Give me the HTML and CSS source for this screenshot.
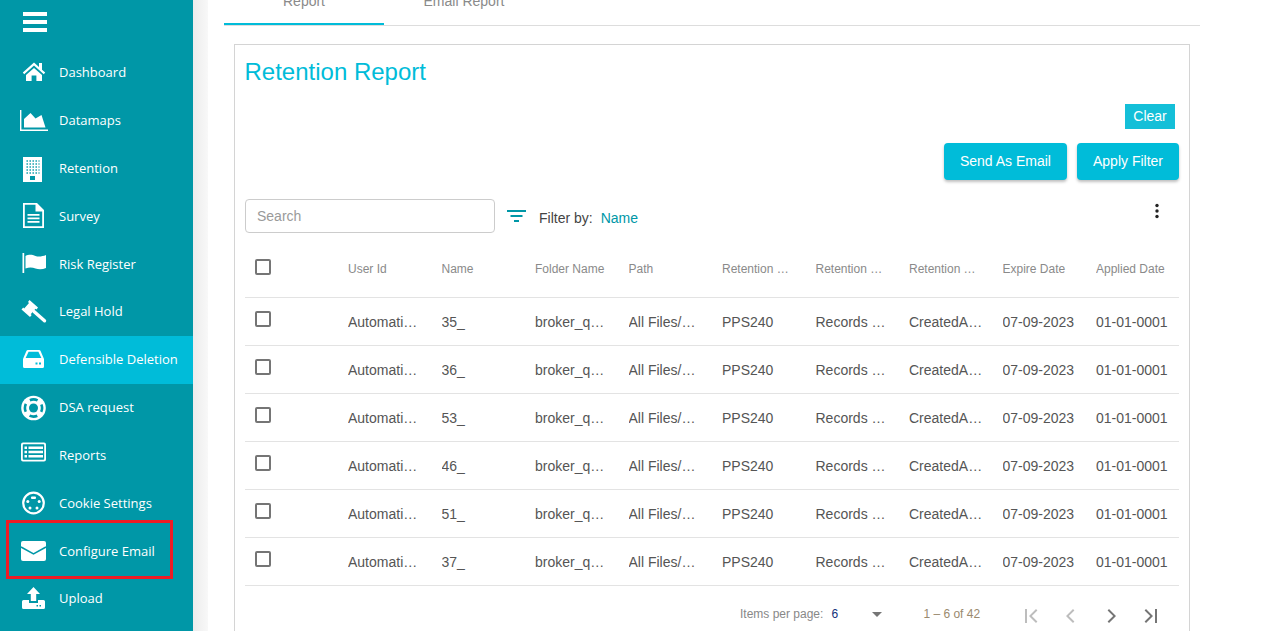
FILE: index.html
```html
<!DOCTYPE html>
<html lang="en">
<head>
<meta charset="utf-8">
<title>Retention Report</title>
<link rel="stylesheet" href="styles.css">
</head>
<body>
<div class="page">
  <nav class="sidebar">
    <div class="burger"><span></span><span></span><span></span></div>
    <a class="nav-item"><svg viewBox="0 0 28 28"><path d="M14 3.500 2.800 13.600l1.400 1.600L14 6.600l9.800 8.600 1.400-1.600-3.200-2.900V4h-3v3.900z"/><path d="M6 16 14 9l8 7v6h-5.600v-5.500h-4.800V22H6z"/></svg><span>Dashboard</span></a>
    <a class="nav-item"><svg viewBox="0 0 28 28"><path d="M0 3h1.400v19.400H28V24H0z"/><path d="M4 20.500V12l6.500-6 5 5.500 6-3.500 4 12.500z"/></svg><span>Datamaps</span></a>
    <a class="nav-item"><svg viewBox="0 0 28 28"><rect x="3" y="2" width="19" height="25"/><path class="win" d="M6.500 6h13M6.500 9h13M6.500 12h13M6.500 15h13M6.500 18h13"/><rect class="cut" x="10" y="21" width="5" height="4"/></svg><span>Retention</span></a>
    <a class="nav-item"><svg viewBox="0 0 28 28"><path d="M3 1h14l7 7v18H3zm1.800 1.800v21.400h17.400V9.500H15.500V2.800z" fill-rule="evenodd"/><path d="M7.500 12h12v1.800h-12zM7.500 15.500h12v1.800h-12zM7.500 19h12v1.800h-12z"/></svg><span>Survey</span></a>
    <a class="nav-item"><svg viewBox="0 0 28 28"><rect x="2.500" y="3" width="1.700" height="20"/><path d="M5.500 6c4-2 7-1 10 0 3 1 7 .5 10.500-1v13c-3.500 1.500-7.500 1.500-10.500.5-3-1-6-1.500-10 0z"/></svg><span>Risk Register</span></a>
    <a class="nav-item"><svg viewBox="0 0 28 28"><path d="m9.500 2 8.500 7.500-1.500 2-1-.8-4.800 5.500 1 .9-1.700 1.900-8.500-7.500 1.700-1.900 1 .8 4.800-5.500-1-.9z"/><path class="handle" d="M14 13.500 24.500 22.800"/></svg><span>Legal Hold</span></a>
    <a class="nav-item active"><svg viewBox="0 0 28 28"><path d="M8 4h11c.8 0 1.300.4 1.600 1L24 13v7.500a1.500 1.500 0 0 1-1.500 1.500h-18A1.500 1.500 0 0 1 3 20.500V13l3.400-8c.3-.6.8-1 1.600-1zm.6 1.800-3 6.200h15.800l-3-6.200z" fill-rule="evenodd"/><rect class="cut" x="15.500" y="16.500" width="2" height="2"/><rect class="cut" x="19" y="16.500" width="2" height="2"/></svg><span>Defensible Deletion</span></a>
    <a class="nav-item"><svg viewBox="0 0 28 28"><circle cx="13.500" cy="14" r="12.300"/><circle class="band" cx="13.500" cy="14" r="8.600"/><circle class="cut" cx="13.500" cy="14" r="4.500"/></svg><span>DSA request</span></a>
    <a class="nav-item"><svg viewBox="0 0 28 28"><path d="M3 1.500h21a2 2 0 0 1 2 2v15a2 2 0 0 1-2 2H3a2 2 0 0 1-2-2v-15a2 2 0 0 1 2-2zm.5 1.800a.7.7 0 0 0-.7.700v14a.7.7 0 0 0 .7.700h20a.7.7 0 0 0 .7-.7V4a.7.7 0 0 0-.7-.7z" fill-rule="evenodd"/><path d="M4.500 5.500H7v2.500H4.500zM4.500 9.800H7v2.500H4.500zM4.500 14H7v2.500H4.500zM8.500 5.500H23v2.500H8.500zM8.500 9.800H23v2.500H8.500zM8.500 14H23v2.500H8.500z"/></svg><span>Reports</span></a>
    <a class="nav-item"><svg viewBox="0 0 28 28"><circle class="ring" cx="13.500" cy="14" r="10.300"/><rect x="11" y="7.500" width="5" height="2.400" rx="1"/><circle cx="7.800" cy="12.500" r="1.500"/><circle cx="19.200" cy="12.500" r="1.500"/><circle cx="10" cy="19" r="1.500"/><circle cx="17" cy="19" r="1.500"/></svg><span>Cookie Settings</span></a>
    <a class="nav-item"><svg viewBox="0 0 28 28"><rect x="1" y="4" width="25" height="20" rx="2"/><path class="vee" d="M1 10l12.500 7L26 10"/></svg><span>Configure Email</span></a>
    <a class="nav-item"><svg viewBox="0 0 28 28"><path d="M13.500 2 20 9h-3.800v7h-5.400V9H7z"/><path d="M3.500 15H9v3h9v-3h5.500a1.500 1.500 0 0 1 1.500 1.500v6a1.500 1.500 0 0 1-1.500 1.500h-20A1.500 1.500 0 0 1 2 22.500v-6A1.500 1.500 0 0 1 3.500 15z"/><rect class="cut" x="16.500" y="20" width="1.500" height="1.500"/><rect class="cut" x="19.500" y="20" width="1.500" height="1.500"/></svg><span>Upload</span></a>
    <div class="callout"></div>
  </nav>
  <div class="gutter"></div>
  <main class="main">
    <div class="tabs">
      <div class="tab selected">Report</div>
      <div class="tab">Email Report</div>
    </div>
    <section class="card">
      <h1 class="title">Retention Report</h1>
      <div class="clear-row"><button class="btn-clear">Clear</button></div>
      <div class="action-row">
        <button class="btn">Send As Email</button>
        <button class="btn">Apply Filter</button>
      </div>
      <div class="filter-row">
        <input class="search" placeholder="Search">
        <svg class="filter-icon" viewBox="0 0 19 12"><path d="M0 0h19v2H0zM3.500 5h12v2h-12zM7 10h5v2H7z"/></svg>
        <span class="filter-label">Filter by:</span>
        <span class="filter-value">Name</span>
        <svg class="kebab" viewBox="0 0 6 16"><circle cx="3" cy="2.500" r="1.700"/><circle cx="3" cy="8" r="1.700"/><circle cx="3" cy="13.500" r="1.700"/></svg>
      </div>
      <div class="table">
        <div class="row head">
          <div class="c-check"><i class="box"></i></div>
          <div class="cell">User Id</div><div class="cell">Name</div><div class="cell">Folder Name</div><div class="cell">Path</div><div class="cell">Retention Policy</div><div class="cell">Retention Schedule</div><div class="cell">Retention Trigger</div><div class="cell">Expire Date</div><div class="cell last">Applied Date</div>
        </div>
        <div class="row">
          <div class="c-check"><i class="box"></i></div>
          <div class="cell">Automation_User</div><div class="cell">35_</div><div class="cell">broker_queue</div><div class="cell">All Files/Reports</div><div class="cell">PPS240</div><div class="cell">Records Management</div><div class="cell">CreatedAt Date</div><div class="cell last">07-09-2023</div><div class="cell last">01-01-0001</div>
        </div>
        <div class="row">
          <div class="c-check"><i class="box"></i></div>
          <div class="cell">Automation_User</div><div class="cell">36_</div><div class="cell">broker_queue</div><div class="cell">All Files/Reports</div><div class="cell">PPS240</div><div class="cell">Records Management</div><div class="cell">CreatedAt Date</div><div class="cell last">07-09-2023</div><div class="cell last">01-01-0001</div>
        </div>
        <div class="row">
          <div class="c-check"><i class="box"></i></div>
          <div class="cell">Automation_User</div><div class="cell">53_</div><div class="cell">broker_queue</div><div class="cell">All Files/Reports</div><div class="cell">PPS240</div><div class="cell">Records Management</div><div class="cell">CreatedAt Date</div><div class="cell last">07-09-2023</div><div class="cell last">01-01-0001</div>
        </div>
        <div class="row">
          <div class="c-check"><i class="box"></i></div>
          <div class="cell">Automation_User</div><div class="cell">46_</div><div class="cell">broker_queue</div><div class="cell">All Files/Reports</div><div class="cell">PPS240</div><div class="cell">Records Management</div><div class="cell">CreatedAt Date</div><div class="cell last">07-09-2023</div><div class="cell last">01-01-0001</div>
        </div>
        <div class="row">
          <div class="c-check"><i class="box"></i></div>
          <div class="cell">Automation_User</div><div class="cell">51_</div><div class="cell">broker_queue</div><div class="cell">All Files/Reports</div><div class="cell">PPS240</div><div class="cell">Records Management</div><div class="cell">CreatedAt Date</div><div class="cell last">07-09-2023</div><div class="cell last">01-01-0001</div>
        </div>
        <div class="row">
          <div class="c-check"><i class="box"></i></div>
          <div class="cell">Automation_User</div><div class="cell">37_</div><div class="cell">broker_queue</div><div class="cell">All Files/Reports</div><div class="cell">PPS240</div><div class="cell">Records Management</div><div class="cell">CreatedAt Date</div><div class="cell last">07-09-2023</div><div class="cell last">01-01-0001</div>
        </div>
      </div>
      <div class="pager">
        <span class="pager-label">Items per page:</span>
        <span class="pager-size">6</span>
        <svg class="caret" viewBox="0 0 10 5"><path d="M0 0h10L5 5z"/></svg>
        <span class="pager-range">1 – 6 of 42</span>
        <svg class="pg off" viewBox="0 0 24 24"><path d="M6 5h2v14H6zM18.400 6.400 17 5l-7 7 7 7 1.400-1.400L12.800 12z"/></svg>
        <svg class="pg off" viewBox="0 0 24 24"><path d="M15.400 6.400 14 5l-7 7 7 7 1.400-1.400L9.800 12z"/></svg>
        <svg class="pg" viewBox="0 0 24 24"><path d="M8.600 6.400 10 5l7 7-7 7-1.400-1.400 5.600-5.600z"/></svg>
        <svg class="pg" viewBox="0 0 24 24"><path d="M16 5h2v14h-2zM5.600 6.400 7 5l7 7-7 7-1.400-1.400 5.600-5.600z"/></svg>
      </div>
    </section>
  </main>
</div>
</body>
</html>
```

FILE: styles.css
```css
* { box-sizing: border-box; }
html, body { margin: 0; height: 100%; overflow: hidden; background: #fff; }
.page { display: flex; height: 631px; overflow: hidden; font-family: "Liberation Sans", Arial, sans-serif; }

.sidebar { position: relative; flex: 0 0 193px; background: #0097a7; color: #fff; font-family: "Open Sans", "Noto Sans", sans-serif; font-size: 13px; }
.burger { height: 49px; padding: 12px 0 0 23px; display: flex; flex-direction: column; gap: 4px; }
.burger span { display: block; width: 24px; height: 4px; background: #fff; }
.nav-item { display: flex; align-items: center; gap: 11px; height: 47.82px; padding-left: 20px; }
.nav-item span { padding-bottom: 1px; }
.nav-item svg { flex: 0 0 28px; width: 28px; height: 28px; fill: #fff; }
.nav-item.active { background: #00bcd9; }
.nav-item .win { fill: none; stroke: #0097a7; stroke-width: 1.400; stroke-dasharray: 1.400 1.600; }
.nav-item .cut { fill: #0097a7; }
.nav-item.active .cut { fill: #00bcd9; }
.nav-item .ring { fill: none; stroke: #fff; stroke-width: 2.200; }
.nav-item .band { fill: none; stroke: #0097a7; stroke-width: 2.600; stroke-dasharray: 8 5.510; stroke-dashoffset: 4; }
.nav-item .vee { fill: none; stroke: #0097a7; stroke-width: 1.500; }
.nav-item .handle { fill: none; stroke: #fff; stroke-width: 3.400; stroke-linecap: round; }
.callout { position: absolute; left: 6px; top: 520px; width: 167px; height: 59px; border: 3px solid #ed1c24; }

.gutter { flex: 0 0 15px; background: linear-gradient(90deg, #ececec, #f8f8f8); }

.main { flex: 0 0 auto; width: 992px; padding: 0 0 0 16px; }
.tabs { display: flex; width: 976px; height: 49px; margin-top: -23px; border-bottom: 1px solid #ddd; }
.tab { width: 160px; height: 48px; display: flex; align-items: center; justify-content: center; font-size: 14px; color: #8a8a8a; }
.tab.selected { border-bottom: 2px solid #00bcd9; padding-top: 2px; }

.card { width: 956px; height: 640px; margin: 18px 0 0 10px; border: 1px solid #d4d4d4; padding: 0 10px; }
.title { margin: 0 0 0 -.5px; padding-top: 11px; height: 54px; font-size: 24px; line-height: 32px; font-weight: 400; color: #00bcd9; }
.clear-row { display: flex; justify-content: flex-end; padding: 5px 4px 0 0; height: 44px; }
.btn-clear { width: 50px; height: 25px; padding: 0 0 2px; border: 0; background: #14bfd8; color: #fff; font: 14px "Liberation Sans", Arial, sans-serif; }
.action-row { display: flex; justify-content: flex-end; gap: 10px; height: 56px; }
.btn { height: 37px; padding: 0 16px 2px; border: 0; border-radius: 4px; background: #00bcd9; color: #fff; font: 14px "Liberation Sans", Arial, sans-serif; box-shadow: 0 2px 3px rgba(0,0,0,.25); }
.filter-row { display: flex; align-items: flex-start; height: 51px; }
.search { width: 250px; height: 34px; padding: 0 11px; border: 1px solid #ccc; border-radius: 4px; font: 14px "Liberation Sans", Arial, sans-serif; color: #444; outline: 0; }
.search::placeholder { color: #9a9a9a; opacity: 1; }
.filter-icon { width: 19px; height: 12px; margin: 11px 0 0 12px; fill: #0097a7; }
.filter-label { margin: 11px 0 0 13px; font-size: 14px; line-height: 16px; color: #444; }
.filter-value { margin: 11px 0 0 8px; font-size: 14px; line-height: 16px; color: #0097a7; }
.kebab { width: 6px; height: 16px; margin: 4px 19px 0 auto; fill: #222; }

.row { display: grid; grid-template-columns: 103px repeat(8, 93.5px) 83px; height: 48px; align-items: center; border-bottom: 1px solid #e3e3e3; }
.row.head { padding-bottom: 10px; }
.c-check { padding: 0 0 6px 10px; display: flex; }
.head .c-check { padding-bottom: 4px; }
.box { display: block; width: 16px; height: 16px; border: 2px solid #757575; border-radius: 2px; }
.cell { overflow: hidden; white-space: nowrap; text-overflow: ellipsis; padding-right: 20px; font-size: 14px; color: #555; }
.head .cell { padding-right: 23px; font-size: 12px; color: #8a8a8a; }
.head .cell.last, .cell.last { padding-right: 0; }

.pager { display: flex; align-items: center; height: 56px; padding-left: 495px; font-size: 12px; color: #888; white-space: nowrap; }
.pager-label { flex: none; }
.pager-size { flex: none; margin-left: 8px; width: 41px; color: #14307a; }
.caret { flex: none; width: 10px; height: 5px; fill: #757575; }
.pager-range { flex: none; margin-left: 41px; width: 96px; color: #9a8a6e; }
.pg { flex: none; width: 24px; height: 24px; margin: 4px 16px 0 0; fill: #757575; }
.pg.off { fill: #bdbdbd; }
```
